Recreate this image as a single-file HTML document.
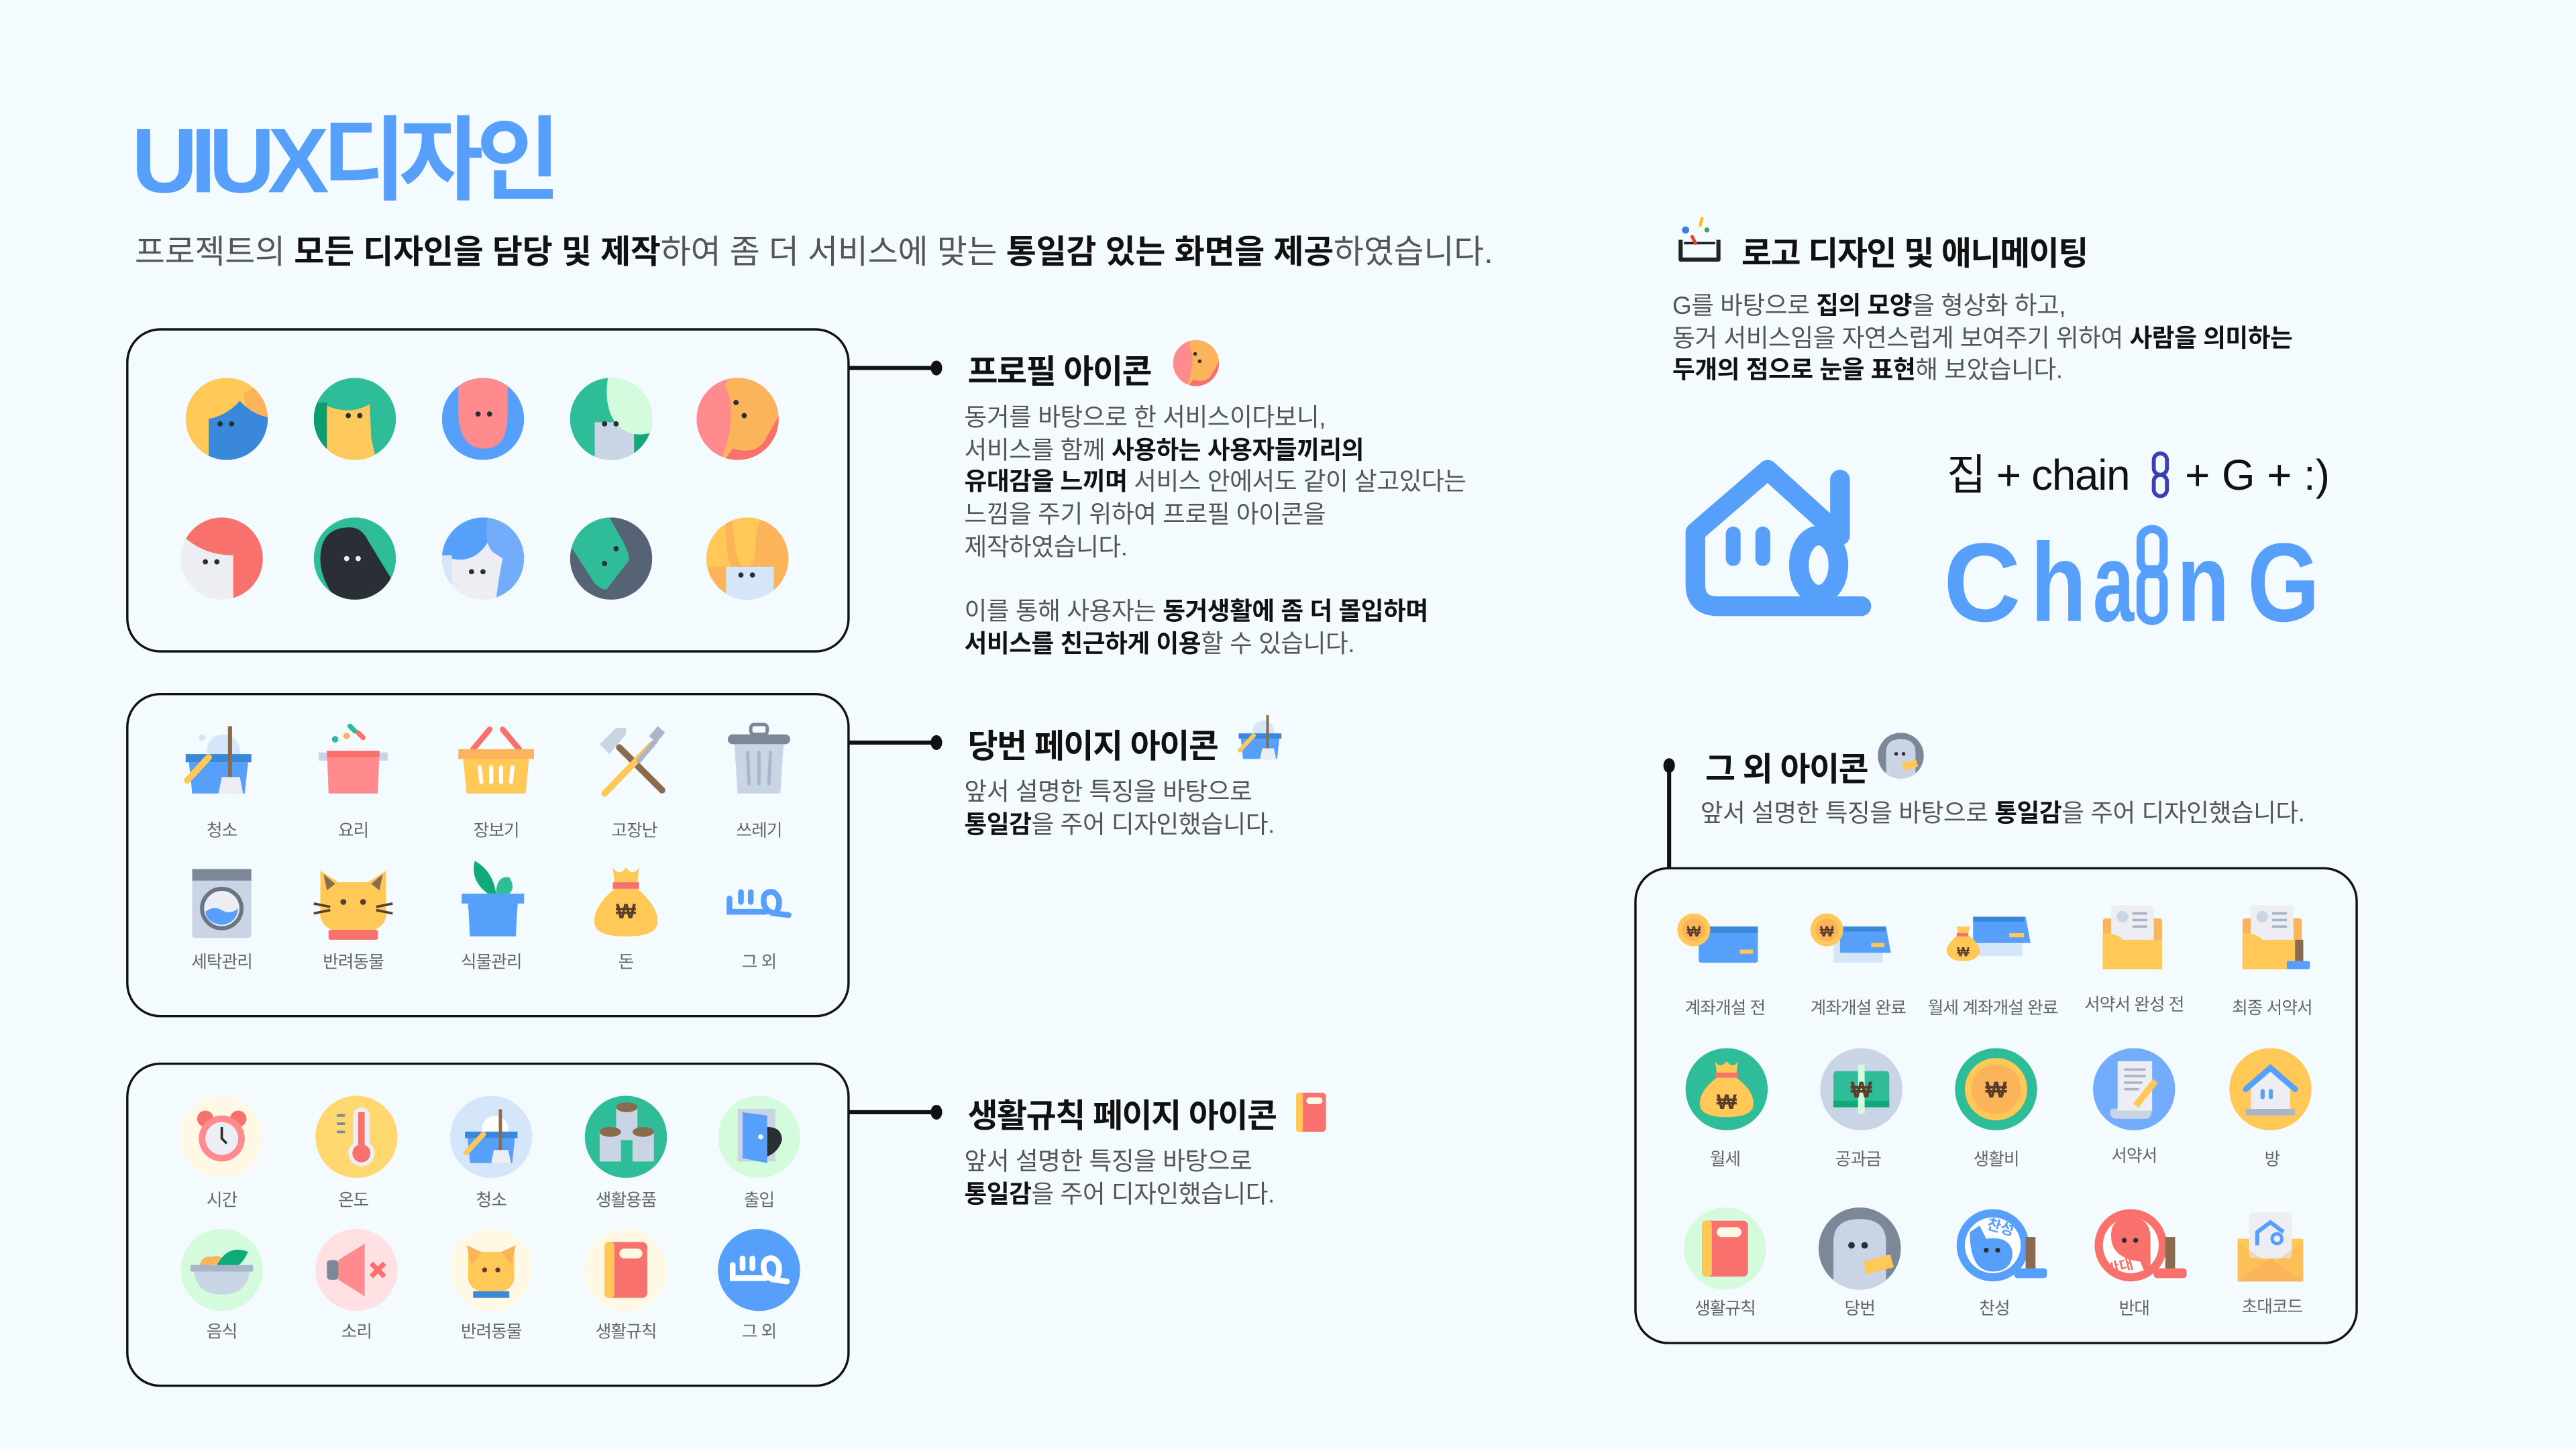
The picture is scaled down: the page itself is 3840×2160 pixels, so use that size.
<!DOCTYPE html>
<html><head><meta charset="utf-8"><style>
html,body{margin:0;padding:0;background:#f4fbff;width:3840px;height:2160px;overflow:hidden}
#s{position:absolute;left:0;top:0;width:1568px;height:882px;transform:scale(2.44898);transform-origin:0 0;font-family:"Liberation Sans","Noto Sans CJK KR",sans-serif;color:#555}
.t{position:absolute;white-space:nowrap}
b{color:#111;font-weight:700}
.h{font-size:20px;font-weight:700;color:#111;letter-spacing:-0.6px}
.p{font-size:15px;line-height:19.7px;letter-spacing:-0.2px;color:#555}
.l{position:absolute;font-size:10.5px;color:#666;letter-spacing:-0.4px;white-space:nowrap;transform:translateX(-50%)}
svg{position:absolute;left:0;top:0}
</style></head><body><div id="s">
<svg width="1568" height="882" viewBox="0 0 1568 882">
<defs><clipPath id="c"><circle cx="0" cy="0" r="25"/></clipPath></defs>
<g fill="none" stroke="#111" stroke-width="1.4">
<rect x="77.5" y="200.5" width="439" height="196" rx="20"/>
<rect x="77.5" y="422.5" width="439" height="196" rx="20"/>
<rect x="77.5" y="647.5" width="439" height="196" rx="20"/>
<rect x="995.5" y="528.5" width="439" height="289" rx="20"/>
</g>
<g stroke="#111" stroke-width="2.5"><line x1="517" y1="224" x2="568" y2="224"/><line x1="517" y1="452" x2="568" y2="452"/><line x1="517" y1="677" x2="568" y2="677"/><line x1="1016" y1="466" x2="1016" y2="528"/></g>
<g fill="#111"><ellipse cx="570" cy="224" rx="3.5" ry="4.5"/><ellipse cx="570" cy="452" rx="3.5" ry="4.5"/><ellipse cx="570" cy="677" rx="3.5" ry="4.5"/><ellipse cx="1016" cy="466" rx="3.5" ry="4.5"/></g>
<!-- profiles row 1 -->
<g transform="translate(138,255)" clip-path="url(#c)"><rect x="-25" y="-25" width="50" height="50" fill="#ffc857"/><path d="M10,-15 Q12,0 25,8 L25,-25Z" fill="#fbb45a"/><path d="M-11,0 Q0,-2 8,-11 Q15,-3 25,-1 L25,25 L-11,25Z" fill="#3a88da"/><circle cx="-4" cy="3" r="1.6" fill="#2a2f36"/><circle cx="3" cy="3" r="1.6" fill="#2a2f36"/></g>
<g transform="translate(216,255)" clip-path="url(#c)"><rect x="-25" y="-25" width="50" height="50" fill="#2ebd98"/><path d="M-25,-10 L-17,-10 L-17,25 L-25,25Z" fill="#109a70"/><path d="M-17,-8 Q-3,-2 9,-9 L10,12 L13,25 L-17,25Z" fill="#fec95c"/><circle cx="-4" cy="-2" r="1.6" fill="#2a2f36"/><circle cx="3" cy="-2" r="1.6" fill="#2a2f36"/></g>
<g transform="translate(294,255)" clip-path="url(#c)"><rect x="-25" y="-25" width="50" height="50" fill="#56a0fb"/><path d="M-15,-25 L15,-25 L15,-3 Q15,18 1,18 Q-15,18 -15,-5Z" fill="#ff8b8f"/><circle cx="-3" cy="-3" r="1.6" fill="#2a2f36"/><circle cx="4" cy="-3" r="1.6" fill="#2a2f36"/></g>
<g transform="translate(372,255)" clip-path="url(#c)"><rect x="-25" y="-25" width="50" height="50" fill="#2ebd98"/><path d="M-10,2 L14,2 L14,25 L-10,25Z" fill="#c9d5e5"/><path d="M14,4 L25,4 L25,25 L14,25Z" fill="#10a97a"/><path d="M-2,-25 Q-5,-5 5,5 Q14,12 25,8 L25,-25Z" fill="#d4fcdc"/><path d="M-25,-25 L-2,-25 Q-5,-5 -12,2 L-25,6Z" fill="#2ebd98"/><circle cx="-4" cy="3" r="1.6" fill="#2a2f36"/><circle cx="3" cy="3" r="1.6" fill="#2a2f36"/></g>
<g transform="translate(449,255)" clip-path="url(#c)"><rect x="-25" y="-25" width="50" height="50" fill="#ff8b8f"/><path d="M-5,-25 L25,-25 L25,25 L-10,25 Q-4,10 -4,-3 Q-4,-15 -8,-20Z" fill="#fbb45a"/><path d="M25,-2 L16,14 Q10,22 -3,18 L-8,25 L25,25Z" fill="#f8716c"/><circle cx="-1" cy="-10" r="1.6" fill="#2a2f36"/><circle cx="4" cy="-2" r="1.6" fill="#2a2f36"/></g>
<!-- profiles row 2 -->
<g transform="translate(135,340)" clip-path="url(#c)"><rect x="-25" y="-25" width="50" height="50" fill="#eceef3"/><path d="M-25,-15 Q-12,-2 7,-2 L7,25 L25,25 L25,-25 L-25,-25Z" fill="#f8716c"/><circle cx="-10" cy="2" r="1.6" fill="#2a2f36"/><circle cx="-3" cy="2" r="1.6" fill="#2a2f36"/></g>
<g transform="translate(216,340)" clip-path="url(#c)"><rect x="-25" y="-25" width="50" height="50" fill="#2ebd98"/><path d="M-17,16 Q-21,8 -21,0 Q-21,-19 -3,-19 Q4,-19 8,-11 L25,17 L25,25 L-12,25Z" fill="#2a2f36"/><circle cx="-5" cy="0" r="1.6" fill="#eee"/><circle cx="2" cy="0" r="1.6" fill="#eee"/></g>
<g transform="translate(294,340)" clip-path="url(#c)"><rect x="-25" y="-25" width="50" height="50" fill="#eceef3"/><path d="M-25,-25 L25,-25 L25,0 L10,-5 L3,-10 Q-7,6 -25,-2Z" fill="#56a0fb"/><path d="M3,-25 Q0,-10 6,-4 L12,0 L25,0 L25,-25Z" fill="#72acfb"/><path d="M12,0 Q9,15 8,25 L25,25 L25,0Z" fill="#72acfb"/><path d="M-25,-2 L-19,-2 L-19,25 L-25,25Z" fill="#d5e6fb"/><circle cx="-7" cy="8" r="1.6" fill="#2a2f36"/><circle cx="0" cy="8" r="1.6" fill="#2a2f36"/></g>
<g transform="translate(372,340)" clip-path="url(#c)"><rect x="-25" y="-25" width="50" height="50" fill="#566374"/><path d="M-25,-25 L-1,-25 L8,-9 Q11,-3 11,1 L-3,19 Q-9,18 -12,12 L-25,-8Z" fill="#2ebd98"/><circle cx="3" cy="-6" r="1.6" fill="#2a2f36"/><circle cx="-4" cy="3" r="1.6" fill="#2a2f36"/></g>
<g transform="translate(455,340)" clip-path="url(#c)"><rect x="-25" y="-25" width="50" height="50" fill="#fbb45a"/><path d="M-25,-25 L-13,-25 Q-14,-5 -10,5 L-25,5Z" fill="#ffc857"/><path d="M-13,5 L16,5 L16,25 L-13,25Z" fill="#d5e6fb"/><path d="M-9,-25 L8,-25 Q4,-12 5,-5 Q4,5 -1,5 Q-6,5 -7,-5 Q-9,-15 -9,-25Z" fill="#ffc857"/><circle cx="-4" cy="10" r="1.6" fill="#2a2f36"/><circle cx="3" cy="10" r="1.6" fill="#2a2f36"/></g>
<!-- profile title icon -->
<g transform="translate(728,221) scale(0.56)" clip-path="url(#c)"><rect x="-25" y="-25" width="50" height="50" fill="#ff8b8f"/><path d="M-5,-25 L25,-25 L25,25 L-10,25 Q-4,10 -4,-3 Q-4,-15 -8,-20Z" fill="#fbb45a"/><path d="M25,-2 L16,14 Q10,22 -3,18 L-8,25 L25,25Z" fill="#f8716c"/><circle cx="-1" cy="-10" r="2" fill="#2a2f36"/><circle cx="4" cy="-2" r="2" fill="#2a2f36"/></g>

<!-- box2 icons row1 -->
<g transform="translate(133,463)"><circle cx="3" cy="-6" r="10" fill="#d5e6fb"/><circle cx="-10" cy="-14" r="2" fill="#d5e6fb"/><rect x="-20" y="-4" width="40" height="5" fill="#3a88da"/><path d="M-18,1 L18,1 L16,20 L-16,20Z" fill="#56a0fb"/><line x1="-19" y1="12" x2="-6" y2="-2" stroke="#ffc857" stroke-width="4" stroke-linecap="round"/><line x1="7" y1="-21" x2="7" y2="10" stroke="#8b6b4e" stroke-width="2.5"/><path d="M2,10 L13,10 L15,20 L0,20Z" fill="#eceef3"/></g>
<g transform="translate(215,463)"><rect x="-21" y="-5" width="42" height="5" fill="#c9d5e5"/><path d="M-16,-6 L16,-6 L15,20 L-15,20Z" fill="#ff8b8f"/><rect x="-16" y="-6" width="32" height="4" fill="#f8716c"/><circle cx="-11" cy="-13" r="2" fill="#2ebd98"/><circle cx="-4" cy="-15" r="2" fill="#fbb45a"/><line x1="3" y1="-17" x2="6" y2="-14" stroke="#f8716c" stroke-width="3" stroke-linecap="round"/><line x1="-2" y1="-21" x2="1" y2="-18" stroke="#2ebd98" stroke-width="3" stroke-linecap="round"/></g>
<g transform="translate(302,463)"><line x1="-14" y1="-7" x2="-4" y2="-19" stroke="#f8716c" stroke-width="3.5" stroke-linecap="round"/><line x1="14" y1="-7" x2="4" y2="-19" stroke="#f8716c" stroke-width="3.5" stroke-linecap="round"/><rect x="-23" y="-7" width="46" height="6" fill="#fbb45a"/><path d="M-20,-1 L20,-1 L18,20 L-18,20Z" fill="#ffc857"/><g stroke="#fff" stroke-width="2.5" stroke-linecap="round"><line x1="-10" y1="4" x2="-9" y2="13"/><line x1="-3" y1="4" x2="-3" y2="13"/><line x1="3" y1="4" x2="3" y2="13"/><line x1="10" y1="4" x2="9" y2="13"/></g></g>
<g transform="translate(385,463)"><line x1="-8" y1="-8" x2="18" y2="18" stroke="#8b6b4e" stroke-width="4" stroke-linecap="round"/><path d="M-20,-10 L-10,-20 L-4,-20 L-4,-16 L-14,-4Z" fill="#c9d5e5"/><line x1="-17" y1="20" x2="12" y2="-10" stroke="#ffc857" stroke-width="4" stroke-linecap="round"/><line x1="4" y1="0" x2="14" y2="-12" stroke="#a8b6c8" stroke-width="3" stroke-linecap="round"/><rect x="12" y="-20" width="6" height="8" fill="#a8b6c8" transform="rotate(40 15 -16)"/></g>
<g transform="translate(462,463)"><rect x="-5" y="-22" width="10" height="6" rx="2" fill="none" stroke="#7c8897" stroke-width="2"/><rect x="-19" y="-16" width="38" height="6" rx="3" fill="#7c8897"/><path d="M-15,-10 L15,-10 L13,20 L-13,20Z" fill="#c9d5e5"/><g stroke="#a8b6c8" stroke-width="2" stroke-linecap="round"><line x1="-7" y1="-5" x2="-6" y2="14"/><line x1="0" y1="-5" x2="0" y2="14"/><line x1="7" y1="-5" x2="6" y2="14"/></g></g>
<!-- box2 row2 -->
<g transform="translate(135,550)"><rect x="-18" y="-21" width="36" height="42" rx="2" fill="#c9d5e5"/><rect x="-18" y="-21" width="36" height="7" fill="#7c8897"/><circle cx="0" cy="3" r="12" fill="#eceef3" stroke="#6b7684" stroke-width="2.5"/><path d="M-10,5 Q-5,1 0,4 Q5,7 10,3 Q9,12 0,13 Q-9,12 -10,5Z" fill="#56a0fb"/></g>
<g transform="translate(215,550)"><path d="M-20,-20 L-9,-13 L9,-13 L20,-20 L20,8 Q18,18 0,18 Q-18,18 -20,8Z" fill="#ffc857"/><path d="M-18,-18 L-11,-12 L-16,-8Z M18,-18 L11,-12 L16,-8Z" fill="#8b6b4e"/><rect x="-15" y="16" width="30" height="6" rx="1" fill="#f8716c"/><circle cx="-6" cy="-1" r="1.8" fill="#5a3e2b"/><circle cx="6" cy="-1" r="1.8" fill="#5a3e2b"/><g stroke="#5a3e2b" stroke-width="1.5"><line x1="-24" y1="0" x2="-14" y2="2"/><line x1="-24" y1="6" x2="-14" y2="4"/><line x1="24" y1="0" x2="14" y2="2"/><line x1="24" y1="6" x2="14" y2="4"/></g></g>
<g transform="translate(300,550)"><path d="M-3,-6 Q-14,-14 -11,-26 Q0,-20 2,-6Z" fill="#10a97a"/><path d="M2,-6 Q2,-17 10,-16 Q14,-10 10,-6Z" fill="#2ebd98"/><rect x="-19" y="-6" width="38" height="6" fill="#56a0fb"/><rect x="-15" y="0" width="30" height="3" fill="#3a88da"/><path d="M-15,0 L15,0 L14,20 L-14,20Z" fill="#56a0fb"/></g>
<g transform="translate(381,550)"><path d="M-8,-22 Q-4,-16 0,-22 Q4,-16 8,-22 L7,-13 L-7,-13Z" fill="#ffc857"/><rect x="-8" y="-13" width="16" height="4" fill="#f8716c"/><path d="M-7,-9 Q-21,3 -19,13 Q-17,20 0,20 Q17,20 19,13 Q21,3 7,-9Z" fill="#ffc857"/><text x="0" y="9" text-anchor="middle" font-size="13" font-weight="700" fill="#5a3e2b" font-family="Liberation Sans,sans-serif">₩</text></g>
<g transform="translate(462,550)" fill="none" stroke="#56a0fb" stroke-width="3.5" stroke-linecap="round"><path d="M-18,-3 L-18,5 L4,5"/><line x1="-11" y1="-7" x2="-11" y2="-1"/><line x1="-5" y1="-7" x2="-5" y2="-1"/><path d="M18,7 L10,6 Q13,2 12,-3 Q10,-8 6,-7 Q2,-6 3,0 Q4,5 10,6"/></g>
<g transform="translate(767,449) scale(0.65)"><circle cx="3" cy="-6" r="10" fill="#d5e6fb"/><rect x="-20" y="-4" width="40" height="5" fill="#3a88da"/><path d="M-18,1 L18,1 L16,20 L-16,20Z" fill="#56a0fb"/><line x1="-19" y1="12" x2="-6" y2="-2" stroke="#ffc857" stroke-width="4" stroke-linecap="round"/><line x1="7" y1="-21" x2="7" y2="10" stroke="#8b6b4e" stroke-width="2.5"/><path d="M2,10 L13,10 L15,20 L0,20Z" fill="#eceef3"/></g>

<!-- box3 -->
<circle cx="135" cy="692" r="25" fill="#fff8e4"/><circle cx="217" cy="692" r="25" fill="#ffd970"/><circle cx="299" cy="692" r="25" fill="#d5e6fb"/><circle cx="381" cy="692" r="25" fill="#2ebd98"/><circle cx="462" cy="692" r="25" fill="#d4fcdc"/>
<circle cx="135" cy="773" r="25" fill="#d4fcdc"/><circle cx="217" cy="773" r="25" fill="#ffe1e3"/><circle cx="299" cy="773" r="25" fill="#fff8e4"/><circle cx="381" cy="773" r="25" fill="#fff8e4"/><circle cx="462" cy="773" r="25" fill="#56a0fb"/>
<g transform="translate(135,692)"><circle cx="-10" cy="-11" r="5" fill="#f8716c"/><circle cx="10" cy="-11" r="5" fill="#f8716c"/><circle cx="0" cy="1" r="14" fill="#ff8b8f"/><circle cx="0" cy="1" r="10" fill="#eceef3"/><path d="M0,-6 L0,1 L3,4" stroke="#2a2f36" stroke-width="1.5" fill="none"/></g>
<g transform="translate(217,692)"><rect x="-2" y="-18" width="10" height="28" rx="5" fill="#eceef3"/><circle cx="3" cy="10" r="8" fill="#eceef3"/><rect x="1" y="-15" width="4" height="22" fill="#f8716c"/><circle cx="3" cy="10" r="5.5" fill="#f8716c"/><g stroke="#7c8897" stroke-width="1.5"><line x1="-12" y1="-13" x2="-7" y2="-13"/><line x1="-12" y1="-8" x2="-7" y2="-8"/><line x1="-12" y1="-3" x2="-7" y2="-3"/></g></g>
<g transform="translate(299,692) scale(0.8)"><circle cx="3" cy="-6" r="10" fill="#fff"/><rect x="-20" y="-4" width="40" height="5" fill="#3a88da"/><path d="M-18,1 L18,1 L16,20 L-16,20Z" fill="#56a0fb"/><line x1="-19" y1="12" x2="-6" y2="-2" stroke="#ffc857" stroke-width="4" stroke-linecap="round"/><line x1="7" y1="-21" x2="7" y2="10" stroke="#8b6b4e" stroke-width="2.5"/><path d="M2,10 L13,10 L15,20 L0,20Z" fill="#eceef3"/></g>
<g transform="translate(381,692)"><rect x="-6" y="-18" width="13" height="20" fill="#c9d5e5"/><ellipse cx="0.5" cy="-18" rx="6.5" ry="3" fill="#8b6b4e"/><rect x="-16" y="-3" width="13" height="18" fill="#c9d5e5"/><rect x="4" y="-3" width="13" height="18" fill="#c9d5e5"/><ellipse cx="-9.5" cy="-3" rx="6.5" ry="3" fill="#8b6b4e"/><ellipse cx="10.5" cy="-3" rx="6.5" ry="3" fill="#8b6b4e"/></g>
<g transform="translate(462,692)"><rect x="-13" y="-17" width="23" height="32" fill="#c9d5e5"/><path d="M-10,-15 L5,-13 L5,16 L-10,13Z" fill="#56a0fb"/><circle cx="1" cy="0" r="1.5" fill="#fff"/><path d="M5,-6 Q14,-6 14,2 Q12,9 5,12Z" fill="#2a2f36"/></g>
<g transform="translate(135,773)"><path d="M-14,-2 Q-12,-9 -6,-8 Q0,-10 2,-4Z" fill="#fbb45a"/><path d="M-3,-3 Q4,-16 16,-11 Q12,-2 6,-1Z" fill="#10a97a"/><rect x="-19" y="-3" width="38" height="4" fill="#a8b6c8"/><path d="M-17,1 L17,1 Q15,15 0,15 Q-15,15 -17,1Z" fill="#c9d5e5"/></g>
<g transform="translate(217,773)"><rect x="-18" y="-6" width="7" height="12" rx="2" fill="#7c8897"/><path d="M-11,-6 L5,-16 L5,16 L-11,6Z" fill="#ff8b8f"/><path d="M9,-4 L17,4 M17,-4 L9,4" stroke="#f8716c" stroke-width="3"/></g>
<g transform="translate(299,773)"><path d="M-14,-14 L-8,-11 L8,-11 L14,-14 L14,6 Q12,14 0,14 Q-12,14 -14,6Z" fill="#ffc857"/><path d="M-15,-15 L-6,-11 L-12,-3Z M15,-15 L6,-11 L12,-3Z" fill="#fbb45a"/><rect x="-11" y="13" width="22" height="4" fill="#3a88da"/><circle cx="-4" cy="0" r="1.5" fill="#5a3e2b"/><circle cx="4" cy="0" r="1.5" fill="#5a3e2b"/></g>
<g transform="translate(381,773)"><rect x="-13" y="-17" width="26" height="34" rx="3" fill="#f8716c"/><rect x="-13" y="-17" width="6" height="34" rx="2" fill="#ffc857"/><rect x="-4" y="-13" width="14" height="6" rx="3" fill="#fff8e4"/></g>
<g transform="translate(462,773)" fill="none" stroke="#fff" stroke-width="3.5" stroke-linecap="round"><path d="M-16,-3 L-16,5 L4,5"/><line x1="-10" y1="-7" x2="-10" y2="-1"/><line x1="-4" y1="-7" x2="-4" y2="-1"/><path d="M17,7 L10,6 Q13,2 12,-3 Q10,-8 6,-7 Q2,-6 3,0 Q4,5 10,6"/></g>
<g transform="translate(798,677) scale(0.7)"><rect x="-13" y="-17" width="26" height="34" rx="3" fill="#f8716c"/><rect x="-13" y="-17" width="6" height="34" rx="2" fill="#ffc857"/><rect x="-4" y="-13" width="14" height="6" rx="3" fill="#fff8e4"/></g>

<!-- logo title icon -->
<g><path d="M1023,146 L1023,158 L1046,158 L1046,146" fill="none" stroke="#222" stroke-width="2.5" stroke-linejoin="round"/><line x1="1025" y1="148" x2="1044" y2="148" stroke="#222" stroke-width="1.5"/><circle cx="1026" cy="140" r="2.2" fill="#3b7de8"/><line x1="1036" y1="133" x2="1035" y2="137" stroke="#f5c518" stroke-width="2" stroke-linecap="round"/><circle cx="1039" cy="140" r="1.5" fill="#34a853"/><line x1="1030" y1="144" x2="1032" y2="148" stroke="#ea4335" stroke-width="2" stroke-linecap="round"/></g>
<!-- house logo -->
<g fill="none" stroke="#56a0fb" stroke-width="12" stroke-linecap="round" stroke-linejoin="round">
<path d="M1120,292 L1120,326 L1076,286 L1032,324 L1032,356 Q1032,369 1046,369 L1133,369"/>
<ellipse cx="1107" cy="344" rx="12" ry="18"/>
</g>
<g stroke="#56a0fb" stroke-width="9" stroke-linecap="round"><line x1="1055" y1="325" x2="1055" y2="340"/><line x1="1073" y1="325" x2="1073" y2="340"/></g>
<text x="1185" y="298" font-size="26" fill="#111" letter-spacing="-0.5" font-family="Liberation Sans,Noto Sans CJK KR,sans-serif">집 + chain</text>
<g transform="translate(1315,289)" fill="none" stroke="#3b3fb5" stroke-width="2.4"><rect x="-4" y="-13" width="8" height="13" rx="4"/><rect x="-4" y="0" width="8" height="13" rx="4"/></g>
<text x="1330" y="298" font-size="26" fill="#111" font-family="Liberation Sans,sans-serif">+ G + :)</text>
<g font-family="Liberation Sans,sans-serif" font-weight="700" font-size="68" fill="#56a0fb"><text x="1183" y="378" textLength="47" lengthAdjust="spacingAndGlyphs">C</text><text x="1236" y="378" textLength="34" lengthAdjust="spacingAndGlyphs">h</text><text x="1274" y="378" textLength="25" lengthAdjust="spacingAndGlyphs">a</text><text x="1325" y="378" textLength="32" lengthAdjust="spacingAndGlyphs">n</text><text x="1368" y="378" textLength="44" lengthAdjust="spacingAndGlyphs">G</text></g>
<g fill="none" stroke="#56a0fb" stroke-width="5"><rect x="1303" y="322" width="14" height="26" rx="7"/><rect x="1303" y="348" width="14" height="30" rx="7"/></g>
<rect x="1305" y="344" width="10" height="8" fill="#56a0fb"/>
<!-- 그 외 icon -->
<g transform="translate(1157,460) scale(0.56)" clip-path="url(#c)"><rect x="-25" y="-25" width="50" height="50" fill="#7c8897"/><path d="M-16,25 L-16,-4 Q-16,-18 0,-18 Q16,-18 16,-4 L16,25Z" fill="#c9d5e5"/><circle cx="-5" cy="-2" r="2" fill="#2a2f36"/><circle cx="3" cy="-2" r="2" fill="#2a2f36"/><rect x="2" y="6" width="16" height="8" fill="#ffc857" transform="rotate(-15 10 10)"/></g>
<!-- box4 row1 -->
<g transform="translate(1048,572)"><rect x="-14" y="-8" width="36" height="22" rx="1.5" fill="#56a0fb"/><rect x="-14" y="-8" width="36" height="4" fill="#3a88da"/><rect x="11" y="6" width="8" height="2.5" fill="#ffc857"/><circle cx="-17" cy="-6" r="10" fill="#ffc857"/><circle cx="-17" cy="-6" r="7" fill="#fbb45a"/><text x="-17" y="-2" text-anchor="middle" font-size="9" font-weight="700" fill="#5a3e2b" font-family="Liberation Sans,sans-serif">₩</text></g>
<g transform="translate(1130,572)"><rect x="-14" y="-2" width="30" height="16" fill="#d5e6fb"/><path d="M-10,-8 L18,-8 L21,8 L-10,8Z" fill="#56a0fb"/><rect x="-10" y="-8" width="28" height="3" fill="#3a88da"/><rect x="9" y="2" width="8" height="2.5" fill="#ffc857"/><circle cx="-18" cy="-6" r="10" fill="#ffc857"/><circle cx="-18" cy="-6" r="7" fill="#fbb45a"/><text x="-18" y="-2" text-anchor="middle" font-size="9" font-weight="700" fill="#5a3e2b" font-family="Liberation Sans,sans-serif">₩</text></g>
<g transform="translate(1213,572)"><rect x="-12" y="-4" width="30" height="14" fill="#d5e6fb"/><path d="M-12,-14 L20,-14 L23,2 L-12,2Z" fill="#56a0fb"/><rect x="-12" y="-14" width="31" height="3" fill="#3a88da"/><rect x="10" y="-4" width="9" height="2.5" fill="#ffc857"/><path d="M-22,-8 L-14,-8 L-15,-3 Q-7,3 -8,8 Q-10,13 -18,13 Q-26,13 -28,8 Q-29,3 -21,-3Z" fill="#ffc857"/><rect x="-22" y="-4" width="7" height="2" fill="#f8716c"/><text x="-18" y="10" text-anchor="middle" font-size="8" font-weight="700" fill="#5a3e2b" font-family="Liberation Sans,sans-serif">₩</text></g>
<g transform="translate(1298,572)"><rect x="-18" y="-13" width="36" height="31" rx="1.5" fill="#fbb45a"/><rect x="-13" y="-21" width="26" height="28" rx="2" fill="#eceef3"/><circle cx="-6" cy="-14" r="3.5" fill="#c9d5e5"/><g stroke="#a8b6c8" stroke-width="1.5"><line x1="0" y1="-16" x2="9" y2="-16"/><line x1="0" y1="-12" x2="9" y2="-12"/><line x1="0" y1="-8" x2="9" y2="-8"/></g><path d="M-18,-4 Q-9,-4 -6,0 L18,0 L18,18 L-18,18Z" fill="#ffc857"/></g>
<g transform="translate(1383,572)"><rect x="-18" y="-13" width="36" height="31" rx="1.5" fill="#fbb45a"/><rect x="-13" y="-21" width="26" height="28" rx="2" fill="#eceef3"/><circle cx="-6" cy="-14" r="3.5" fill="#c9d5e5"/><g stroke="#a8b6c8" stroke-width="1.5"><line x1="0" y1="-16" x2="9" y2="-16"/><line x1="0" y1="-12" x2="9" y2="-12"/><line x1="0" y1="-8" x2="9" y2="-8"/></g><path d="M-18,-4 Q-9,-4 -6,0 L18,0 L18,18 L-18,18Z" fill="#ffc857"/><rect x="14" y="0" width="5" height="14" fill="#8b6b4e"/><rect x="9" y="13" width="14" height="5" rx="1" fill="#56a0fb"/></g>
<!-- box4 row2 -->
<circle cx="1051" cy="663" r="25" fill="#2ebd98"/><circle cx="1133" cy="663" r="25" fill="#c9d5e5"/><circle cx="1215" cy="663" r="25" fill="#2ebd98"/><circle cx="1299" cy="663" r="25" fill="#72acfb"/><circle cx="1382" cy="663" r="25" fill="#ffc857"/>
<g transform="translate(1051,663)"><path d="M-7,-17 Q-4,-12 0,-17 Q4,-12 7,-17 L6,-10 L-6,-10Z" fill="#ffc857"/><rect x="-7" y="-10" width="14" height="3" fill="#f8716c"/><path d="M-6,-7 Q-18,2 -16,11 Q-14,17 0,17 Q14,17 16,11 Q18,2 6,-7Z" fill="#ffc857"/><text x="0" y="12" text-anchor="middle" font-size="13" font-weight="700" fill="#5a3e2b" font-family="Liberation Sans,sans-serif">₩</text></g>
<g transform="translate(1133,663)"><rect x="-17" y="-11" width="34" height="22" rx="2" fill="#2ebd98"/><rect x="-17" y="7" width="34" height="4" fill="#10a97a"/><rect x="-2" y="-15" width="4" height="30" fill="#d4fcdc"/><text x="0" y="5" text-anchor="middle" font-size="14" font-weight="700" fill="#5a3e2b" font-family="Liberation Sans,sans-serif">₩</text></g>
<g transform="translate(1215,663)"><circle r="19" fill="#ffc857"/><circle r="15" fill="#fbb45a"/><text x="0" y="5" text-anchor="middle" font-size="14" font-weight="700" fill="#5a3e2b" font-family="Liberation Sans,sans-serif">₩</text></g>
<g transform="translate(1299,663)"><path d="M-14,12 Q-16,18 -10,18 L8,18 Q12,16 10,10 Z" fill="#c9d5e5"/><rect x="-10" y="-17" width="21" height="30" fill="#eceef3"/><g stroke="#a8b6c8" stroke-width="1.5"><line x1="-6" y1="-12" x2="7" y2="-12"/><line x1="-6" y1="-8" x2="7" y2="-8"/><line x1="-6" y1="-4" x2="5" y2="-4"/><line x1="-6" y1="0" x2="3" y2="0"/></g><line x1="1" y1="10" x2="13" y2="-5" stroke="#ffc857" stroke-width="4"/></g>
<g transform="translate(1382,663)"><path d="M-12,-2 L0,-12 L12,-2 L12,14 L-12,14Z" fill="#eceef3"/><path d="M-15,0 L0,-13 L15,0" fill="none" stroke="#56a0fb" stroke-width="3.5" stroke-linecap="round"/><rect x="-15" y="12" width="30" height="4" fill="#a8b6c8"/><rect x="-6" y="0" width="2.5" height="6" rx="1" fill="#56a0fb"/><rect x="-1" y="0" width="2.5" height="6" rx="1" fill="#56a0fb"/></g>
<!-- box4 row3 -->
<circle cx="1050" cy="760" r="25" fill="#d4fcdc"/><circle cx="1132" cy="760" r="25" fill="#7c8897"/>
<g transform="translate(1050,760)"><rect x="-14" y="-17" width="28" height="34" rx="3" fill="#f8716c"/><rect x="-14" y="-17" width="6" height="34" rx="2" fill="#ffc857"/><rect x="-5" y="-13" width="15" height="6" rx="3" fill="#fff8e4"/></g>
<g transform="translate(1132,760)" clip-path="url(#c)"><rect x="-25" y="-25" width="50" height="50" fill="#7c8897"/><path d="M-16,25 L-16,-4 Q-16,-18 0,-18 Q16,-18 16,-4 L16,25Z" fill="#c9d5e5"/><circle cx="-5" cy="-2" r="2" fill="#2a2f36"/><circle cx="3" cy="-2" r="2" fill="#2a2f36"/><rect x="3" y="6" width="17" height="8" fill="#ffc857" transform="rotate(-15 10 10)"/></g>
<g transform="translate(1213,758)"><circle r="22" fill="#56a0fb"/><circle r="17" fill="#fff"/><path d="M-14,-8 Q-14,16 0,16 Q12,16 12,4 Q10,-6 -4,-4 L-8,-12Z" fill="#56a0fb"/><circle cx="-4" cy="3" r="1.5" fill="#2a2f36"/><circle cx="3" cy="3" r="1.5" fill="#2a2f36"/><text x="4" y="-8" text-anchor="middle" font-size="9" font-weight="700" fill="#56a0fb" font-family="Noto Sans CJK KR,sans-serif" transform="rotate(15 4 -8)">찬성</text><rect x="20" y="-5" width="6" height="20" fill="#8b6b4e"/><rect x="13" y="14" width="20" height="6" rx="2" fill="#56a0fb"/></g>
<g transform="translate(1297,758)"><circle r="22" fill="#f8716c"/><circle r="17" fill="#fff"/><path d="M-12,-6 Q-12,-17 0,-17 Q12,-17 12,-4 L12,16 Q8,18 6,10 Q-12,8 -12,-6Z" fill="#f8716c"/><circle cx="-4" cy="-3" r="1.5" fill="#2a2f36"/><circle cx="3" cy="-3" r="1.5" fill="#2a2f36"/><text x="-6" y="16" text-anchor="middle" font-size="9" font-weight="700" fill="#f8716c" font-family="Noto Sans CJK KR,sans-serif" transform="rotate(-15 -6 16)">반대</text><rect x="21" y="-5" width="6" height="20" fill="#8b6b4e"/><rect x="14" y="14" width="20" height="6" rx="2" fill="#f8716c"/></g>
<g transform="translate(1382,760)"><path d="M-20,-6 L20,-6 L20,20 L-20,20Z" fill="#ffc857"/><rect x="-13" y="-22" width="26" height="28" rx="2" fill="#eceef3"/><path d="M-20,20 L0,6 L20,20Z" fill="#fbb45a"/><path d="M-20,-4 L0,10 L20,-4 L20,20 L-20,20Z" fill="#fbb45a" opacity="0.4"/><path d="M-8,-2 L-8,-10 L0,-16 L8,-10" fill="none" stroke="#56a0fb" stroke-width="2.5"/><circle cx="4" cy="-6" r="3" fill="none" stroke="#56a0fb" stroke-width="2"/></g>
</svg>

<div class="t" style="left:80px;top:66px;font-size:56px;font-weight:700;color:#56a0fb;letter-spacing:-4.5px;line-height:64px">UIUX디자인</div>
<div class="t" style="left:82px;top:137px;font-size:20px;letter-spacing:-0.1px;color:#555">프로젝트의 <b>모든 디자인을 담당 및 제작</b>하여 좀 더 서비스에 맞는 <b>통일감 있는 화면을 제공</b>하였습니다.</div>

<div class="t h" style="left:589px;top:210px">프로필 아이콘</div>
<div class="t p" style="left:587px;top:245px">동거를 바탕으로 한 서비스이다보니,<br>서비스를 함께 <b>사용하는 사용자들끼리의</b><br><b>유대감을 느끼며</b> 서비스 안에서도 같이 살고있다는<br>느낌을 주기 위하여 프로필 아이콘을<br>제작하였습니다.<br><br>이를 통해 사용자는 <b>동거생활에 좀 더 몰입하며</b><br><b>서비스를 친근하게 이용</b>할 수 있습니다.</div>

<div class="t h" style="left:589px;top:438px">당번 페이지 아이콘</div>
<div class="t p" style="left:587px;top:473px">앞서 설명한 특징을 바탕으로<br><b>통일감</b>을 주어 디자인했습니다.</div>

<div class="t h" style="left:589px;top:663px">생활규칙 페이지 아이콘</div>
<div class="t p" style="left:587px;top:698px">앞서 설명한 특징을 바탕으로<br><b>통일감</b>을 주어 디자인했습니다.</div>

<div class="t h" style="left:1060px;top:138px">로고 디자인 및 애니메이팅</div>
<div class="t p" style="left:1018px;top:177px">G를 바탕으로 <b>집의 모양</b>을 형상화 하고,<br>동거 서비스임을 자연스럽게 보여주기 위하여 <b>사람을 의미하는</b><br><b>두개의 점으로 눈을 표현</b>해 보았습니다.</div>

<div class="t h" style="left:1038px;top:452px">그 외 아이콘</div>
<div class="t p" style="left:1035px;top:486px">앞서 설명한 특징을 바탕으로 <b>통일감</b>을 주어 디자인했습니다.</div>

<div class="l" style="left:135px;top:498px">청소</div><div class="l" style="left:215px;top:498px">요리</div><div class="l" style="left:302px;top:498px">장보기</div><div class="l" style="left:386px;top:498px">고장난</div><div class="l" style="left:462px;top:498px">쓰레기</div>
<div class="l" style="left:135px;top:578px">세탁관리</div><div class="l" style="left:215px;top:578px">반려동물</div><div class="l" style="left:299px;top:578px">식물관리</div><div class="l" style="left:381px;top:578px">돈</div><div class="l" style="left:462px;top:578px">그 외</div>
<div class="l" style="left:135px;top:723px">시간</div><div class="l" style="left:215px;top:723px">온도</div><div class="l" style="left:299px;top:723px">청소</div><div class="l" style="left:381px;top:723px">생활용품</div><div class="l" style="left:462px;top:723px">출입</div>
<div class="l" style="left:135px;top:803px">음식</div><div class="l" style="left:217px;top:803px">소리</div><div class="l" style="left:299px;top:803px">반려동물</div><div class="l" style="left:381px;top:803px">생활규칙</div><div class="l" style="left:462px;top:803px">그 외</div>
<div class="l" style="left:1050px;top:606px">계좌개설 전</div><div class="l" style="left:1131px;top:606px">계좌개설 완료</div><div class="l" style="left:1213px;top:606px">월세 계좌개설 완료</div><div class="l" style="left:1299px;top:604px">서약서 완성 전</div><div class="l" style="left:1383px;top:606px">최종 서약서</div>
<div class="l" style="left:1050px;top:698px">월세</div><div class="l" style="left:1131px;top:698px">공과금</div><div class="l" style="left:1215px;top:698px">생활비</div><div class="l" style="left:1299px;top:696px">서약서</div><div class="l" style="left:1383px;top:698px">방</div>
<div class="l" style="left:1050px;top:789px">생활규칙</div><div class="l" style="left:1132px;top:789px">당번</div><div class="l" style="left:1214px;top:789px">찬성</div><div class="l" style="left:1299px;top:789px">반대</div><div class="l" style="left:1383px;top:788px">초대코드</div>
</div></body></html>
